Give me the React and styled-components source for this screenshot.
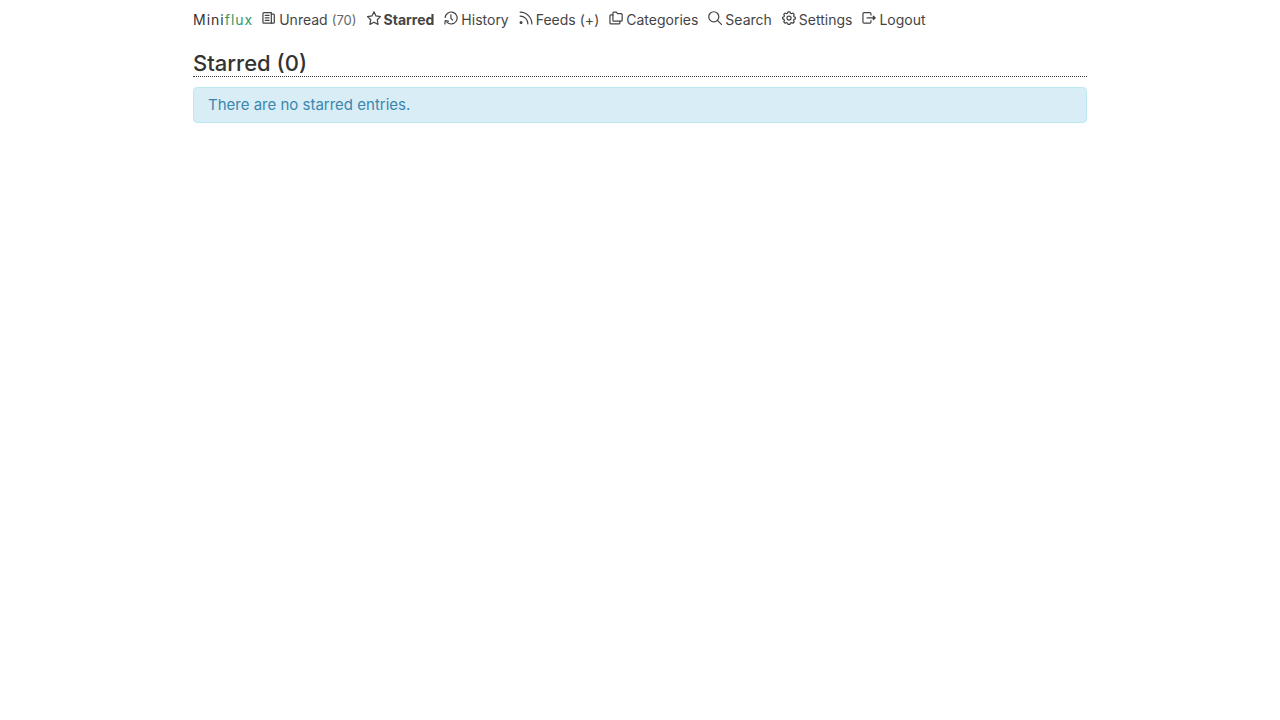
import React from "react";
import styled, { createGlobalStyle } from "styled-components";

const GlobalStyle = createGlobalStyle`
  * {
    box-sizing: border-box;
  }

  body {
    margin: 0;
    background-color: #fff;
    color: #333;
    font-family: Inter, "Liberation Sans", sans-serif;
    text-rendering: optimizeLegibility;
  }
`;

// menu icons
const icons = {
  unread: (
    <>
      <path d="M2 1.7h8v11.4H2a1 1 0 0 1-1-1V2.7a1 1 0 0 1 1-1z" />
      <path d="M10 3.3h2.2a1 1 0 0 1 1 1v7.8a1 1 0 0 1-1 1H10M3.5 4.7h4M3.5 7.4h4M3.5 10.1h4" />
    </>
  ),
  star: (
    <path d="M7.5 .8l2.1 4.5 4.9.7L11 9.4l.8 4.9-4.3-2.3-4.4 2.3.9-4.9L.5 6l4.9-.7z" />
  ),
  history: (
    <>
      <path d="M1.3 6.8A6.4 6.4 0 1 1 3 11.9" />
      <path d="M.9 13.9l.4-3.5 3.5.4M7.4 4v3.8l1.8 2" />
    </>
  ),
  feeds: (
    <>
      <path d="M1.2 1.2a12.6 12.6 0 0 1 12.6 12.6M1.2 5.4a8.2 8.2 0 0 1 8.3 8.4" />
      <circle cx="2.2" cy="12.4" r="1" fill="currentColor" />
    </>
  ),
  categories: (
    <>
      <path d="M5.2 1.2h2.6l1.4 1.7h3.9a1 1 0 0 1 1 1v6a1 1 0 0 1-1 1H5.2a1 1 0 0 1-1-1V2.2a1 1 0 0 1 1-1z" />
      <path d="M4.2 4.2H2a1 1 0 0 0-1 1v7.6a1 1 0 0 0 1 1h8.6a1 1 0 0 0 1-1v-1.9" />
    </>
  ),
  search: (
    <>
      <circle cx="6.2" cy="6.2" r="5.4" />
      <path d="M10.1 10.1l4.3 4.3" />
    </>
  ),
  settings: (
    <>
      <path d="M6.4 .9h2.2l.5 1.5 1.1.5 1.5-.7 1.4 1.5-.7 1.5.4 1 1.5.5v1.8l-1.5.5-.4 1.1.7 1.5-1.4 1.5-1.5-.7-1.1.4-.5 1.5H6.4l-.5-1.5-1.1-.4-1.5.7-1.4-1.5.7-1.5-.4-1.1-1.5-.5V6.7l1.5-.5.4-1-.7-1.5 1.4-1.5 1.5.7 1.1-.5z" />
      <circle cx="7.5" cy="7.6" r="2.2" />
    </>
  ),
  logout: (
    <>
      <path d="M9.6 4.3V2.9a1.2 1.2 0 0 0-1.2-1.2H2.2A1.2 1.2 0 0 0 1 2.9v9a1.2 1.2 0 0 0 1.2 1.2h6.2a1.2 1.2 0 0 0 1.2-1.2v-1.5" />
      <path d="M5.4 7.4h8.6M12.2 5.5l2 1.9-2 1.9z" />
    </>
  ),
};

const menu = [
  { icon: "unread", label: "Unread", count: 70 },
  { icon: "star", label: "Starred", active: true },
  { icon: "history", label: "History" },
  { icon: "feeds", label: "Feeds", add: true },
  { icon: "categories", label: "Categories" },
  { icon: "search", label: "Search" },
  { icon: "settings", label: "Settings" },
  { icon: "logout", label: "Logout" },
];

function App() {
  return (
    <>
      <GlobalStyle />
      <Container>
        <Header>
          <Nav aria-label="Main menu">
            <Logo href="#unread">
              Mini<span>flux</span>
            </Logo>
            <Menu>
              {menu.map((item) => (
                <MenuItem key={item.label}>
                  <MenuLink
                    href={`#${item.label.toLowerCase()}`}
                    $active={item.active}
                    aria-current={item.active ? "page" : undefined}
                  >
                    <Icon viewBox="0 0 15 15" aria-hidden="true">
                      {icons[item.icon]}
                    </Icon>
                    {item.label}
                  </MenuLink>
                  {item.count && <Counter>({item.count})</Counter>}
                  {item.add && (
                    <span>
                      (<MenuLink href="#subscribe">+</MenuLink>)
                    </span>
                  )}
                </MenuItem>
              ))}
            </Menu>
          </Nav>
        </Header>
        <main>
          <PageTitle>Starred (0)</PageTitle>
          <Alert role="alert">There are no starred entries.</Alert>
        </main>
      </Container>
    </>
  );
}

const Container = styled.div`
  max-width: 900px;
  margin: 0 auto;
  padding: 0 3px;
`;

const Header = styled.header`
  padding-top: 10px;
`;

const Nav = styled.nav`
  display: flex;
  align-items: center;
  gap: 9px;
  color: #444;
  font-size: 14px;
  line-height: 20px;
`;

const Logo = styled.a`
  color: #333;
  letter-spacing: 1px;
  text-decoration: none;

  span {
    color: #339966;
  }
`;

const Menu = styled.ul`
  display: flex;
  flex-wrap: wrap;
  gap: 10px;
  margin: 0;
  padding: 0;
  list-style: none;
`;

const MenuItem = styled.li`
  display: flex;
  gap: 4px;
`;

const MenuLink = styled.a`
  display: inline-flex;
  gap: 3px;
  color: #444;
  font-weight: ${(props) => (props.$active ? 700 : 400)};
  text-decoration: none;
`;

const Icon = styled.svg`
  width: 14px;
  height: 14px;
  margin-top: 1px;
  fill: none;
  stroke: currentColor;
  stroke-width: 1.3;
  stroke-linecap: round;
  stroke-linejoin: round;
`;

const Counter = styled.span`
  color: #666;
  font-size: 13px;
`;

const PageTitle = styled.h1`
  margin: 20px 0 10px;
  border-bottom: 1px dotted #333;
  color: #333;
  font-size: 22px;
  font-weight: 500;
  line-height: 26px;
`;

const Alert = styled.p`
  margin: 0;
  padding: 7px 14px;
  border: 1px solid #bce8f1;
  border-radius: 4px;
  background-color: #d9edf7;
  color: #3a87ad;
  font-size: 15px;
  line-height: 20px;
`;

export default App;
